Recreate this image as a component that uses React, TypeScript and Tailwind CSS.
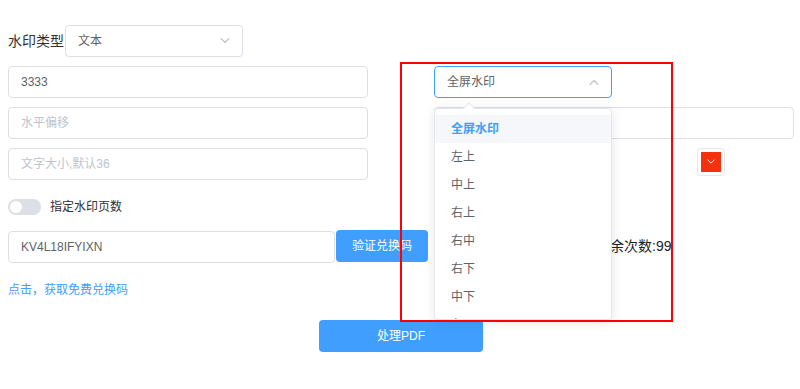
import React from 'react';

const font = { fontFamily: '"Liberation Sans", "Noto Sans CJK SC", sans-serif' };

function Chevron({ up = false, className = '' }: { up?: boolean; className?: string }) {
  return (
    <svg className={className} width="10" height="6" viewBox="0 0 10 6" fill="none" stroke="currentColor" strokeWidth={1.2}>
      <path d={up ? 'M1 5.5L5 1.5L9 5.5' : 'M1 0.5L5 4.5L9 0.5'} strokeLinecap="round" strokeLinejoin="round" />
    </svg>
  );
}

const positions = ['全屏水印', '左上', '中上', '右上', '右中', '右下', '中下', '左下'];

export default function App() {
  return (
    <div className="relative w-[800px] h-[389px] bg-white overflow-hidden text-[12px]" style={font}>
      <div className="pt-[25px] pl-2">
        {/* type */}
        <div className="flex items-center h-8">
          <span className="text-[14px] text-[#333] w-[57px]">水印类型</span>
          <div className="w-[178px] h-8 border border-[#dcdfe6] rounded flex items-center justify-between pl-3 pr-3 text-[#606266]">
            <span>文本</span>
            <Chevron className="text-[#c0c4cc]" />
          </div>
        </div>

        <div className="mt-[9px] flex gap-[66px]">
          <div className="w-[360px] h-8 border border-[#dcdfe6] rounded flex items-center pl-3 text-[#606266]">3333</div>
          <div className="w-[178px] h-8 border border-[#409eff] rounded flex items-center justify-between pl-3 pr-3 text-[#606266]">
            <span>全屏水印</span>
            <Chevron up className="text-[#c0c4cc]" />
          </div>
        </div>

        <div className="mt-[9px] flex gap-[66px]">
          <div className="w-[360px] h-8 border border-[#dcdfe6] rounded flex items-center pl-3 text-[#c0c4cc]">水平偏移</div>
          <div className="w-[360px] h-8 border border-[#dcdfe6] rounded" />
        </div>

        <div className="mt-[9px] flex">
          <div className="w-[360px] h-8 border border-[#dcdfe6] rounded flex items-center pl-3 text-[#c0c4cc]">文字大小,默认36</div>
          <div className="ml-[329px] w-7 h-7 border border-[#e6e6e6] rounded p-[3px]">
            <div className="w-full h-full bg-[#f5300f] flex items-center justify-center text-white">
              <Chevron className="w-[8px]" />
            </div>
          </div>
        </div>

        {/* switch */}
        <div className="mt-[19px] flex items-center h-4">
          <div className="w-[33px] h-4 rounded-full bg-[#dcdfe6] p-[2px]">
            <div className="w-3 h-3 rounded-full bg-white" />
          </div>
          <span className="ml-[9px] text-[#303133]">指定水印页数</span>
        </div>

        {/* redeem */}
        <div className="mt-[15px] flex items-start">
          <div className="mt-px w-[327px] h-8 border border-[#dcdfe6] rounded flex items-center pl-3 text-[#606266]">KV4L18IFYIXN</div>
          <button className="ml-px w-[92px] h-8 rounded bg-[#409eff] text-white">验证兑换码</button>
          <span className="ml-[168px] h-8 flex items-center text-[14px] text-[#222]">剩余次数:99</span>
        </div>

        <div className="mt-[19px] h-4 flex items-center text-[#409eff]">点击，获取免费兑换码</div>

        <div className="mt-[22px] flex pl-[311px]">
          <button className="w-[164px] h-8 rounded bg-[#409eff] text-white">处理PDF</button>
        </div>
      </div>

      {/* open select dropdown */}
      <div className="absolute left-[434px] top-[108px] w-[178px]">
        <div className="absolute left-[31px] -top-[4px] w-2 h-2 rotate-45 bg-white border-l border-t border-[#e4e7ed]" />
        <div className="h-[212px] overflow-hidden bg-white border border-[#e4e7ed] rounded shadow-[0_2px_12px_rgba(0,0,0,0.1)] pt-[6px]">
          {positions.map((p, i) => (
            <div
              key={i}
              className={`h-7 flex items-center pl-4 ${i === 0 ? 'bg-[#f5f7fa] text-[#409eff] font-bold' : 'text-[#606266]'}`}
            >
              {p}
            </div>
          ))}
        </div>
      </div>

      {/* annotation frame */}
      <div className="absolute left-[400px] top-[62px] w-[273px] h-[260px] border-2 border-[#ff0000]" />
    </div>
  );
}
